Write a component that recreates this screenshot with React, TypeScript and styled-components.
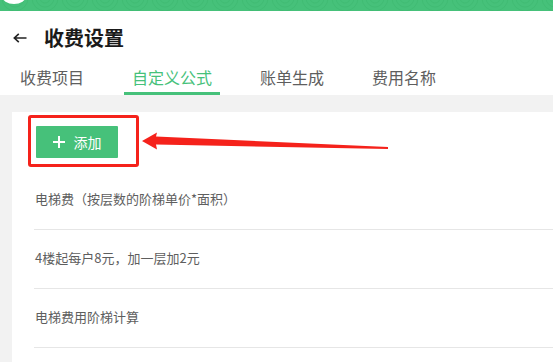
import React, { useState } from "react";
import styled, { createGlobalStyle } from "styled-components";

const GlobalStyle = createGlobalStyle`
  html, body {
    margin: 0;
    padding: 0;
    background: #f2f2f2;
    font-family: "Noto Sans CJK SC", "Noto Sans", sans-serif;
  }
`;

const GREEN = "#46c17a";

const Page = styled.div`
  position: relative;
  width: 553px;
  height: 362px;
  overflow: hidden;
  background: #f2f2f2;
`;

const TopBar = styled.div`
  height: 11px;
  background: ${GREEN};
  overflow: hidden;
  svg {
    display: block;
  }
`;

const Header = styled.div`
  background: #fff;
`;

const TitleRow = styled.div`
  height: 54px;
  display: flex;
  align-items: center;
  padding-left: 13px;
  gap: 17px;
`;

const Title = styled.h1`
  margin: 0;
  font-size: 20px;
  font-weight: 700;
  color: #1a1a1a;
  line-height: 24px;
`;

const Tabs = styled.div`
  display: flex;
  padding-left: 12px;
  gap: 32px;
  height: 30px;
`;

const Tab = styled.div<{ $active?: boolean }>`
  padding: 0 8px 3px;
  font-size: 16px;
  line-height: 24px;
  color: ${(p) => (p.$active ? GREEN : "#5e5e5e")};
  border-bottom: 3px solid ${(p) => (p.$active ? GREEN : "transparent")};
  cursor: pointer;
`;

const Body = styled.div`
  padding: 17px 0 0 12px;
`;

const Card = styled.div`
  background: #fff;
  padding: 14px 0 0 22px;
  min-height: 260px;
`;

const AddButton = styled.button`
  margin-left: 2px;
  width: 82px;
  height: 32px;
  border: none;
  border-radius: 1px;
  background: ${GREEN};
  color: #fff;
  font-family: inherit;
  font-size: 14px;
  display: flex;
  align-items: center;
  justify-content: center;
  gap: 9px;
  padding: 0;
  cursor: pointer;
`;

const List = styled.ul`
  list-style: none;
  margin: 13px 0 0;
  padding: 0;
`;

const Row = styled.li`
  padding: 20px 0 22px 1px;
  font-size: 13px;
  line-height: 16px;
  color: #5e5e5e;
  border-bottom: 1px solid #e6e6e6;
`;

const Highlight = styled.div`
  position: absolute;
  left: 28px;
  top: 115px;
  width: 111px;
  height: 52px;
  box-sizing: border-box;
  border: 3px solid #f5221b;
  border-radius: 3px;
  pointer-events: none;
`;

const Arrow = styled.svg`
  position: absolute;
  left: 0;
  top: 0;
  pointer-events: none;
`;

const BackArrow = () => (
  <svg width="14" height="10" viewBox="0 0 14 10" fill="none">
    <path d="M13.5 5H1.5M5.8 0.8L1.3 5l4.5 4.2" stroke="#222" strokeWidth="1.6" />
  </svg>
);

const PlusIcon = () => (
  <svg width="12" height="12" viewBox="0 0 12 12">
    <path d="M6 0v12M0 6h12" stroke="#fff" strokeWidth="2" />
  </svg>
);

// subtle ring pattern on the green status strip
const BarPattern = () => {
  const centers = Array.from({ length: 20 }, (_, i) => i * 30 + 15);
  return (
    <svg width="553" height="11">
      {centers.map((cx) =>
        [13, 9, 5].map((r) => (
          <circle key={`${cx}-${r}`} cx={cx} cy={-2} r={r} fill="none" stroke="#41bc74" strokeWidth="1" />
        ))
      )}
      <ellipse cx="14" cy="-4" rx="12" ry="8" fill="#fff" />
    </svg>
  );
};

const tabs = ["收费项目", "自定义公式", "账单生成", "费用名称"];
const formulas = ["电梯费（按层数的阶梯单价*面积）", "4楼起每户8元，加一层加2元", "电梯费用阶梯计算"];

export default function App() {
  const [active, setActive] = useState(1);
  return (
    <Page>
      <GlobalStyle />
      <TopBar>
        <BarPattern />
      </TopBar>
      <Header>
        <TitleRow>
          <BackArrow />
          <Title>收费设置</Title>
        </TitleRow>
        <Tabs>
          {tabs.map((t, i) => (
            <Tab key={t} $active={i === active} onClick={() => setActive(i)}>
              {t}
            </Tab>
          ))}
        </Tabs>
      </Header>
      <Body>
        <Card>
          <AddButton>
            <PlusIcon />
            添加
          </AddButton>
          <List>
            {formulas.map((f) => (
              <Row key={f}>{f}</Row>
            ))}
          </List>
        </Card>
      </Body>
      <Highlight />
      <Arrow width="553" height="362">
        <polygon points="142,141 157,132.5 156,136.5 388,147 388,149 156,144.5 157,149.5" fill="#f5221b" />
      </Arrow>
    </Page>
  );
}
